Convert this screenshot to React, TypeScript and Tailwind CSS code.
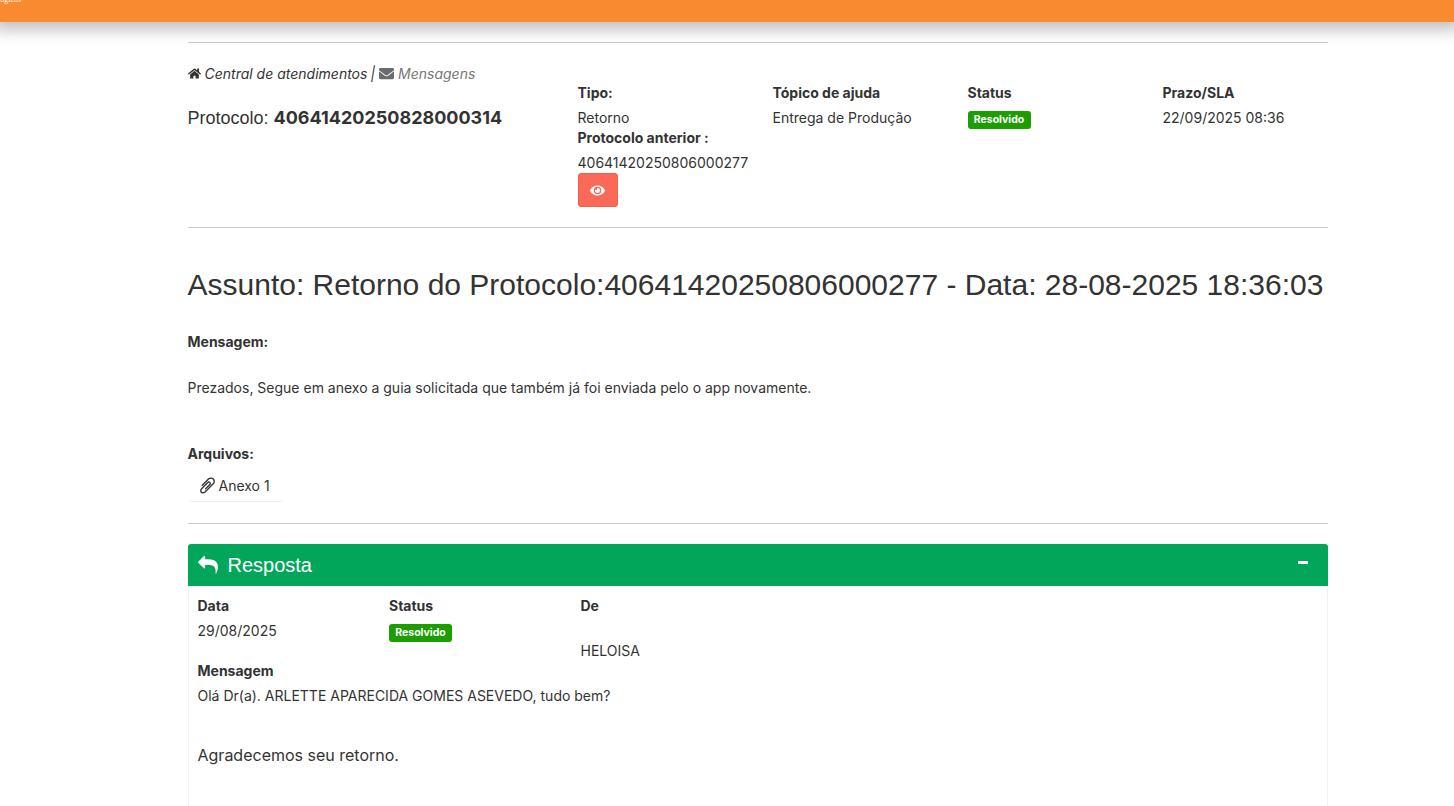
import { FaHome, FaEnvelope, FaEye } from "react-icons/fa";

const Badge = () => (
    <span className="inline-block h-[18px] w-[63px] rounded-[3px] bg-[#1c9e00] text-center text-[10.5px] font-bold leading-[17px] text-white">
        Resolvido
    </span>
);

// font awesome 4 glyphs, the 5 set in react-icons draws them differently
const ReplyIcon = () => (
    <svg viewBox="0 0 1792 1792" className="h-5 w-5 shrink-0" fill="currentColor">
        <path d="M1792 1120q0 166-127 451-3 7-10.500 24t-13.500 30-13 22q-12 17-28 17-15 0-23.500-10t-8.500-25q0-9 2.500-26.500t2.500-23.500q5-68 5-123 0-101-17.500-181t-48.500-138.500-80-101-105.500-69.500-133-42.500-154-21.500-175.500-6h-224v256q0 26-19 45t-45 19-45-19l-512-512q-19-19-19-45t19-45l512-512q19-19 45-19t45 19 19 45v256h224q713 0 875 403 53 134 53 333z" />
    </svg>
);

const ClipIcon = () => (
    <svg viewBox="0 0 1792 1792" className="h-[19px] w-[19px] shrink-0 -scale-x-100" fill="currentColor">
        <path d="M1596 1385q0 117-79 196t-196 79q-135 0-235-100l-777-776q-113-115-113-271 0-159 110-270t269-111q158 0 273 113l605 606q10 10 10 22 0 16-30.500 46.500t-46.500 30.500q-13 0-23-10l-606-607q-79-77-181-77-106 0-179 75t-73 181q0 105 76 181l776 777q63 63 145 63 64 0 106-42t42-106q0-82-63-145l-581-581q-26-24-60-24-29 0-48 19t-19 48q0 32 25 59l410 410q10 10 10 22 0 16-31 47t-47 31q-12 0-22-10l-410-410q-63-61-63-149 0-82 57-139t139-57q88 0 149 63l581 581q100 98 100 235z" />
    </svg>
);

export default function App() {
    return (
        <div className="h-[806px] overflow-hidden bg-white font-['Inter',sans-serif] text-[14px] text-[#333333]">
            {/* top bar */}
            <div className="relative z-10 h-[22px] bg-[#f98a2f] shadow-[0_2px_16px_6px_rgba(0,0,0,0.25)]">
                <div className="absolute inset-0 overflow-hidden">
                    <span className="absolute left-[-2px] top-[-5px] font-['Liberation_Serif',serif] text-[8px] leading-[10px] text-white">
                        lógicos
                    </span>
                </div>
            </div>

            <div className="ml-[187.5px] w-[1140.5px] pt-5">
                <hr className="border-t border-[#cccccc]" />

                {/* cabecalho */}
                <div className="flex border-b border-[#cccccc] pb-5 pt-5">
                    <div className="w-[390px]">
                        <div className="flex h-[20px] items-center italic">
                            <FaHome className="mr-[4px] text-[13px] text-[#333333]" />
                            <span>Central de atendimentos</span>
                            <span className="ml-[3px]">|</span>
                            <FaEnvelope className="ml-[4px] mr-[4px] text-[15px] text-[#6b6b6b]" />
                            <span className="text-[#777777]">Mensagens</span>
                        </div>
                        <div className="mt-[25px] text-[18px] leading-[20px]">
                            <span className="font-['Liberation_Sans',sans-serif]">Protocolo: </span>
                            <b>40641420250828000314</b>
                        </div>
                    </div>
                    <div className="w-[195px] pt-[20px]">
                        <div className="font-bold leading-[20px]">Tipo:</div>
                        <div className="mt-[5px] leading-[20px]">Retorno</div>
                        <div className="font-bold leading-[20px]">Protocolo anterior :</div>
                        <div className="mt-[5px] leading-[20px]">40641420250806000277</div>
                        <button className="flex h-[34px] w-[40px] items-center justify-center rounded-[3px] border border-[#ee5f4c] bg-[#fb6a56] text-white">
                            <FaEye className="text-[15px]" />
                        </button>
                    </div>
                    <div className="w-[195px] pt-[20px]">
                        <div className="font-bold leading-[20px]">Tópico de ajuda</div>
                        <div className="mt-[5px] leading-[20px]">Entrega de Produção</div>
                    </div>
                    <div className="w-[195px] pt-[20px]">
                        <div className="font-bold leading-[20px]">Status</div>
                        <div className="mt-[6px] leading-[18px]"><Badge /></div>
                    </div>
                    <div className="w-[165px] pt-[20px]">
                        <div className="font-bold leading-[20px]">Prazo/SLA</div>
                        <div className="mt-[5px] leading-[20px]">22/09/2025 08:36</div>
                    </div>
                </div>

                {/* assunto */}
                <h1 className="mt-[40px] whitespace-nowrap font-['Liberation_Sans',sans-serif] text-[30px] leading-[33px]">
                    Assunto: Retorno do Protocolo:40641420250806000277 - Data: 28-08-2025 18:36:03
                </h1>
                <div className="mt-[31px] font-bold leading-[20px]">Mensagem:</div>
                <p className="mt-[26px] leading-[20px]">
                    Prezados, Segue em anexo a guia solicitada que também já foi enviada pelo o app novamente.
                </p>
                <div className="mt-[46px] font-bold leading-[20px]">Arquivos:</div>
                <div className="ml-[1px] mt-[6px] flex h-[32px] w-[94px] items-center rounded-b-[3px] border-b border-[#eeeeee] pl-[9px]">
                    <ClipIcon />
                    <span className="ml-[2px]">Anexo 1</span>
                </div>
                <hr className="mt-[21px] border-t border-[#cccccc]" />

                {/* resposta */}
                <div className="mt-5 rounded-t-[3px] border-r border-[#f2f2f2] pb-[60px]">
                    <div className="-mr-px flex h-[42px] items-center rounded-t-[3px] bg-[#02a65a] pl-[10px] pr-[20px] text-white">
                        <ReplyIcon />
                        <span className="ml-[10px] font-['Liberation_Sans',sans-serif] text-[20px]">Resposta</span>
                        <span className="-mt-[5px] ml-auto h-[3px] w-[10px] bg-white" />
                    </div>
                    <div className="border-l border-[#f2f2f2] px-[9px] pb-[60px] pt-[10px]">
                        <div className="flex">
                            <div className="w-[191.5px]">
                                <div className="font-bold leading-[20px]">Data</div>
                                <div className="mt-[5px] leading-[20px]">29/08/2025</div>
                            </div>
                            <div className="w-[191.5px]">
                                <div className="font-bold leading-[20px]">Status</div>
                                <div className="mt-[6px] leading-[18px]"><Badge /></div>
                            </div>
                            <div>
                                <div className="font-bold leading-[20px]">De</div>
                                <div className="mt-[25px] leading-[20px]">HELOISA</div>
                            </div>
                        </div>
                        <div className="font-bold leading-[20px]">Mensagem</div>
                        <div className="mt-[5px] leading-[20px]">
                            Olá Dr(a). ARLETTE APARECIDA GOMES ASEVEDO, tudo bem?
                        </div>
                        <div className="mt-[39px] text-[16px] leading-[20px]">Agradecemos seu retorno.</div>
                    </div>
                </div>
            </div>
        </div>
    );
}
